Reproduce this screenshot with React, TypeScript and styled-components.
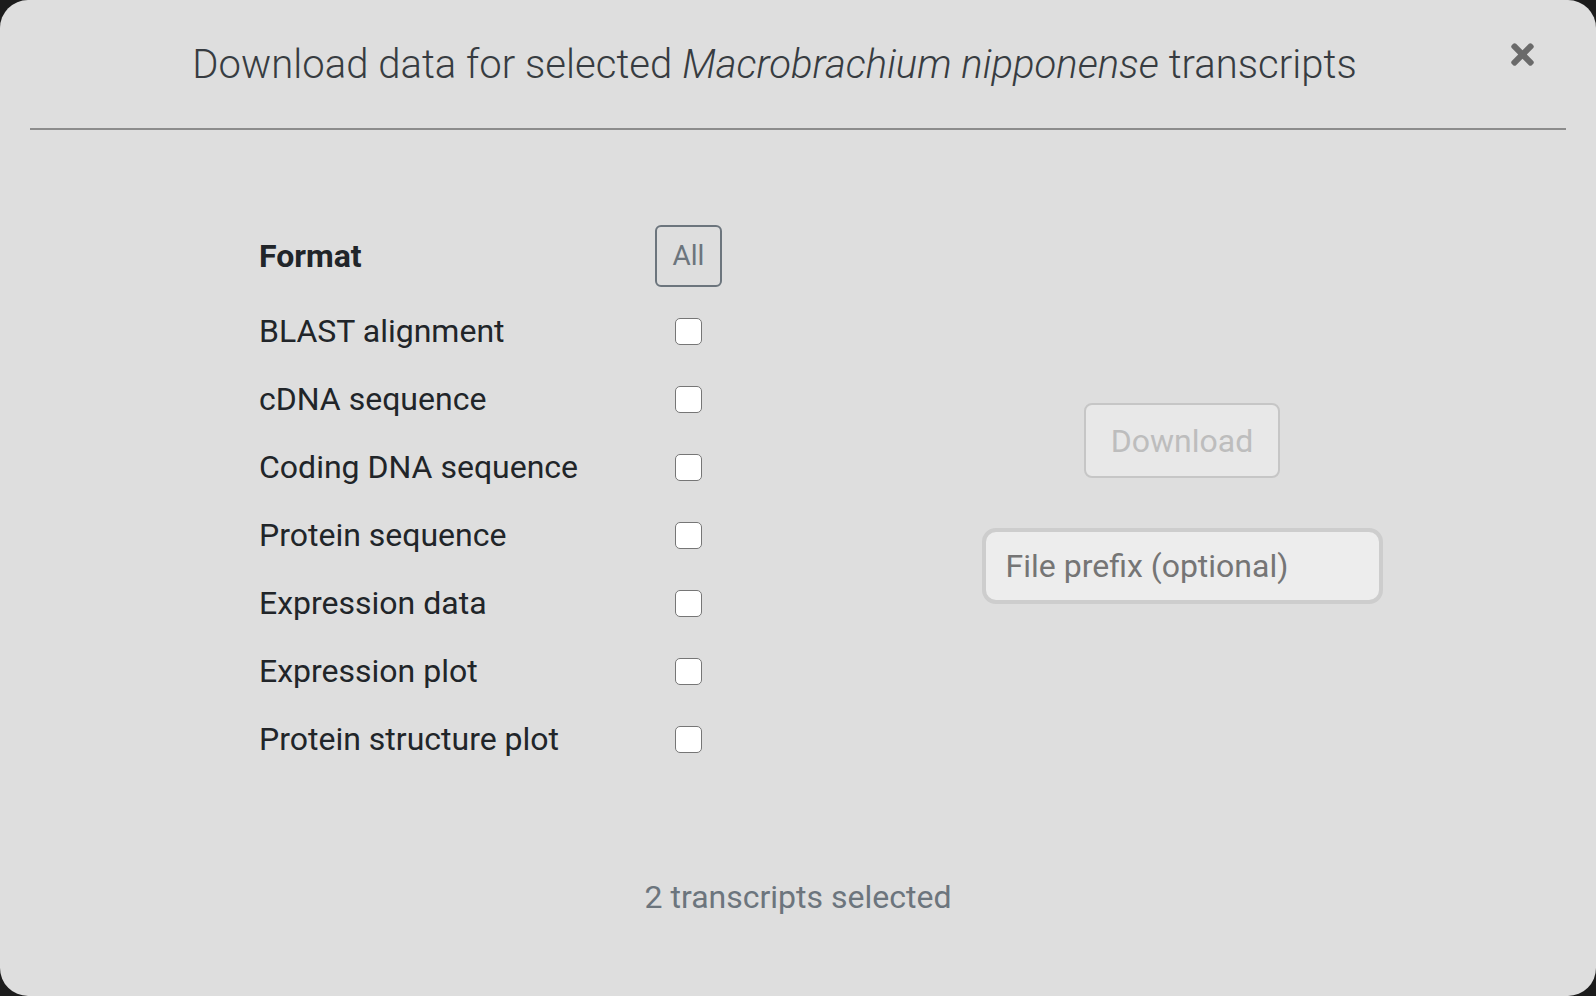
import React from "react";
import styled, { createGlobalStyle } from "styled-components";
import { FaTimes } from "react-icons/fa";

const GlobalStyle = createGlobalStyle`
  html, body {
    margin: 0;
    padding: 0;
    background: #1c1c1c;
  }
  * { box-sizing: border-box; }
  body {
    font-family: Roboto, "Noto Sans", "Liberation Sans", sans-serif;
  }
`;

const Modal = styled.div`
  width: 1596px;
  height: 996px;
  background: #dedede;
  border-radius: 28px;
  display: flex;
  flex-direction: column;
  overflow: hidden;
`;

const Header = styled.div`
  display: flex;
  align-items: flex-start;
  padding: 41px 63px 0 37px;
`;

const Title = styled.h5`
  flex: 1;
  margin: 0;
  text-align: center;
  font-size: 40px;
  line-height: 48px;
  font-weight: 300;
  letter-spacing: 0.03px;
  color: #373c41;
  em {
    font-style: italic;
  }
`;

const CloseButton = styled.button`
  width: 21px;
  height: 24px;
  padding: 0;
  border: 0;
  background: transparent;
  color: #6a6a6a;
  display: flex;
  align-items: center;
  justify-content: center;
  overflow: visible;
  cursor: pointer;
  margin-top: 1px;
  svg {
    flex: none;
  }
`;

const Divider = styled.hr`
  margin: 39px 30px 0;
  border: 0;
  border-top: 2px solid #8c8c8c;
  height: 0;
`;

const Body = styled.div`
  display: grid;
  grid-template-columns: 1fr 1fr;
  align-items: center;
  padding: 95px 30px 0;
`;

const LeftCol = styled.div`
  padding-left: 229px;
`;

const RightCol = styled.div`
  display: flex;
  flex-direction: column;
  align-items: center;
  gap: 50px;
  padding-top: 8px;
`;

const Row = styled.div<{ $head?: boolean }>`
  display: flex;
  align-items: center;
  height: ${(p) => (p.$head ? "62px" : "68px")};
  margin-bottom: ${(p) => (p.$head ? "10px" : "0")};
`;

const Label = styled.div<{ $bold?: boolean }>`
  width: 395px;
  font-size: 32px;
  line-height: 48px;
  color: #212529;
  font-weight: ${(p) => (p.$bold ? 700 : 400)};
`;

const Cell = styled.div`
  width: 69px;
  display: flex;
  justify-content: center;
  align-items: center;
`;

const AllButton = styled.button`
  font-family: inherit;
  font-size: 28px;
  line-height: 42px;
  padding: 8px 16px;
  border: 2px solid #6c757d;
  border-radius: 6px;
  background: transparent;
  color: #6c757d;
`;

const Check = styled.input`
  appearance: none;
  -webkit-appearance: none;
  width: 27px;
  height: 27px;
  margin: 0;
  background: #fff;
  border: 1.5px solid #767676;
  border-radius: 5px;
`;

const DownloadButton = styled.button`
  font-family: inherit;
  font-size: 32px;
  line-height: 48px;
  padding: 12px 25px 11px;
  border: 2px solid #c6c6c6;
  border-radius: 8px;
  background: #e8e8e8;
  color: #bdbdbd;
`;

const PrefixInput = styled.input`
  width: 401px;
  height: 76px;
  padding: 0 20px;
  border: 4px solid #cdcdcd;
  border-radius: 14px;
  background: #ededed;
  font-family: inherit;
  font-size: 32px;
  color: #212529;
  outline: none;
  &::placeholder {
    color: #757575;
  }
`;

const Footer = styled.div`
  margin-top: 100px;
  text-align: center;
  font-size: 32px;
  line-height: 48px;
  color: #6c757d;
`;

const formats = [
  "BLAST alignment",
  "cDNA sequence",
  "Coding DNA sequence",
  "Protein sequence",
  "Expression data",
  "Expression plot",
  "Protein structure plot",
];

export default function App() {
  return (
    <>
      <GlobalStyle />
      <Modal>
        <Header>
          <Title>
            Download data for selected <em>Macrobrachium nipponense</em> transcripts
          </Title>
          <CloseButton aria-label="Close">
            <FaTimes size={33} />
          </CloseButton>
        </Header>
        <Divider />
        <Body>
          <LeftCol>
            <Row $head>
              <Label $bold>Format</Label>
              <Cell>
                <AllButton>All</AllButton>
              </Cell>
            </Row>
            {formats.map((f) => (
              <Row key={f}>
                <Label>{f}</Label>
                <Cell>
                  <Check type="checkbox" />
                </Cell>
              </Row>
            ))}
          </LeftCol>
          <RightCol>
            <DownloadButton disabled>Download</DownloadButton>
            <PrefixInput placeholder="File prefix (optional)" />
          </RightCol>
        </Body>
        <Footer>2 transcripts selected</Footer>
      </Modal>
    </>
  );
}
